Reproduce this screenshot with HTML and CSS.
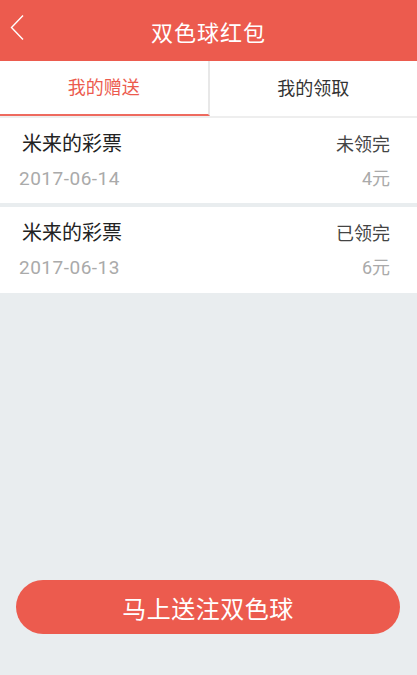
FILE: index.html
```html
<!DOCTYPE html>
<html lang="zh-CN">
<head>
<meta charset="utf-8">
<title>双色球红包</title>
<link rel="stylesheet" href="styles.css">
</head>
<body>
<div class="page">
  <header class="topbar">
    <span class="back">
      <svg width="16" height="28" viewBox="0 0 16 28"><polyline points="14,1.5 2.5,13.5 14,25.5" fill="none" stroke="#fff" stroke-width="1.4"/></svg>
    </span>
    <h1 class="title">双色球红包</h1>
  </header>
  <nav class="tabs">
    <div class="tab active">我的赠送</div>
    <div class="tab">我的领取</div>
  </nav>
  <ul class="list">
    <li class="item">
      <div class="row"><span class="name">米来的彩票</span><span class="status">未领完</span></div>
      <div class="row"><span class="date">2017-06-14</span><span class="amount">4元</span></div>
    </li>
    <li class="item">
      <div class="row"><span class="name">米来的彩票</span><span class="status">已领完</span></div>
      <div class="row"><span class="date">2017-06-13</span><span class="amount">6元</span></div>
    </li>
  </ul>
  <div class="spacer"></div>
  <div class="actions">
    <button class="btn">马上送注双色球</button>
  </div>
</div>
</body>
</html>
```
FILE: styles.css
```css
* { box-sizing: border-box; }
html, body { margin: 0; padding: 0; }
body {
  background: #e9edef;
  font-family: Roboto, "Noto Sans CJK SC", sans-serif;
  width: 417px;
  height: 675px;
  overflow: hidden;
}
.page {
  display: flex;
  flex-direction: column;
  height: 675px;
}
.topbar {
  height: 61px;
  background: #ec5b4e;
  display: flex;
  align-items: center;
  justify-content: center;
  position: relative;
}
.back {
  position: absolute;
  left: 9px;
  top: 14px;
  display: flex;
}
.title {
  margin: 0;
  color: #fff;
  font-size: 22px;
  font-weight: normal;
  letter-spacing: 1px;
}
.tabs {
  display: flex;
  background: #fff;
  height: 57px;
  border-bottom: 2px solid #eeeeee;
}
.tab {
  flex: 1;
  display: flex;
  align-items: center;
  justify-content: center;
  font-size: 18px;
  color: #333;
  padding-bottom: 3px;
}
.tab:first-child {
  border-right: 2px solid #e8e8e8;
}
.tab.active {
  color: #ec5b4e;
  border-bottom: 2px solid #ee6a5f;
}
.list {
  list-style: none;
  margin: 0;
  padding: 0;
  display: flex;
  flex-direction: column;
  gap: 4px;
}
.item {
  background: #fff;
  height: 86px;
  padding: 14px 27px 0 19px;
  display: flex;
  flex-direction: column;
  gap: 11px;
}
.item:first-child { height: 85px; }
.row {
  display: flex;
  justify-content: space-between;
  align-items: baseline;
  height: 24px;
  line-height: 24px;
}
.name {
  font-size: 20px;
  color: #222;
  margin-left: 3px;
}
.status {
  font-size: 18px;
  color: #444;
}
.date {
  font-size: 19px;
  color: #aaaaaa;
  letter-spacing: 0.5px;
}
.amount {
  font-size: 18px;
  color: #aaaaaa;
}
.spacer { flex: 1; }
.actions {
  padding: 0 17px 41px 16px;
}
.btn {
  width: 100%;
  height: 54px;
  border: none;
  border-radius: 27px;
  background: #ec5b4e;
  color: #fff;
  font-family: Roboto, "Noto Sans CJK SC", sans-serif;
  font-size: 24px;
  letter-spacing: 0.5px;
  padding: 0;
}
```
